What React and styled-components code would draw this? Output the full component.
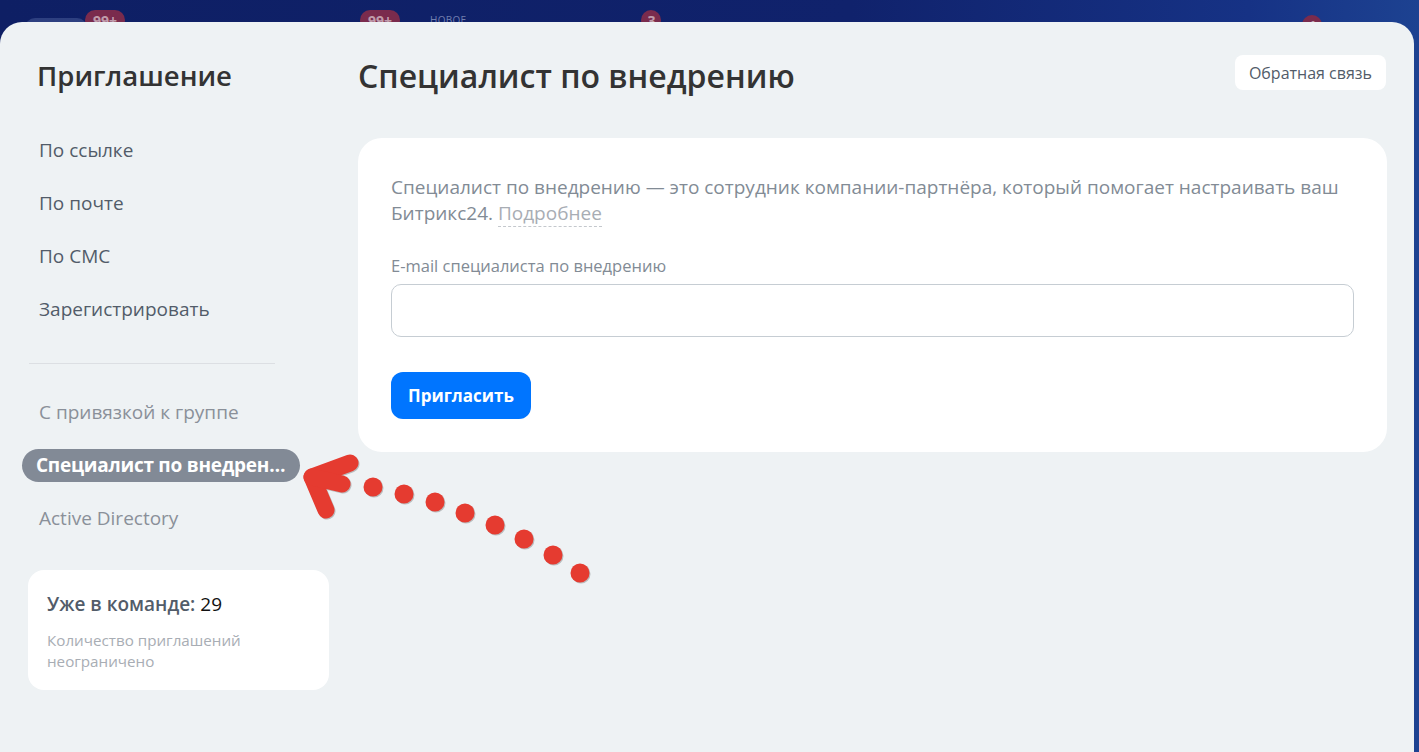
import React from "react";
import styled, { createGlobalStyle } from "styled-components";

const GlobalStyle = createGlobalStyle`
	html, body {
		margin: 0;
		padding: 0;
	}
	body {
		font-family: "Open Sans", "Noto Sans", Arial, sans-serif;
		background: linear-gradient(90deg, #0e1f64 0%, #10226c 60%, #163285 88%, #1d4291 100%);
		overflow: hidden;
	}
	* {
		box-sizing: border-box;
	}
`;

const Page = styled.div`
	height: 100vh;
	display: flex;
	flex-direction: column;
`;

// strip of the portal header peeking out above the slider
const TopStrip = styled.div`
	height: 22px;
	overflow: hidden;
	display: flex;
	align-items: flex-start;
	padding-top: 10px;
`;

const HeaderTab = styled.div`
	margin-left: 25px;
	margin-top: 8px;
	width: 62px;
	height: 20px;
	border-radius: 10px;
	background: rgba(140, 160, 210, 0.25);
`;

const Counter = styled.div`
	margin-left: ${(p) => p.$offset || 0}px;
	margin-top: ${(p) => p.$top || 0}px;
	min-width: ${(p) => p.$w || 40}px;
	height: 20px;
	padding: 0 6px;
	border-radius: 10px;
	background: #7a2b4d;
	color: rgba(255, 255, 255, 0.55);
	font-size: 14px;
	font-weight: 700;
	line-height: 22px;
	text-align: center;
`;

const HeaderLabel = styled.div`
	margin-left: 30px;
	margin-top: 3px;
	font-size: 10px;
	color: rgba(200, 210, 235, 0.55);
	letter-spacing: 0.3px;
`;

const Panel = styled.div`
	position: relative;
	flex: 1;
	margin-right: 5px;
	background: #eef2f4;
	border-radius: 22px 22px 0 0;
	display: grid;
	grid-template-columns: 358px 1fr;
`;

const Sidebar = styled.nav`
	display: flex;
	flex-direction: column;
	align-items: flex-start;
	padding: 37px 0 0 22px;
`;

const SideTitle = styled.h2`
	margin: 0 0 41px 15px;
	font-size: 27.5px;
	line-height: 34px;
	font-weight: 600;
	color: #333;
`;

const MenuItem = styled.div`
	max-width: 278px;
	height: 33px;
	line-height: 33px;
	margin-bottom: 20px;
	padding: 0 ${(p) => (p.$active ? 14 : 17)}px;
	border-radius: 17px;
	font-size: 19px;
	font-weight: ${(p) => (p.$active ? 700 : 400)};
	letter-spacing: ${(p) => (p.$active ? "-0.25px" : "0")};
	white-space: nowrap;
	overflow: hidden;
	text-overflow: ellipsis;
	background: ${(p) => (p.$active ? "#828a96" : "transparent")};
	color: ${(p) => (p.$active ? "#fff" : p.$muted ? "#8a9099" : "#525c69")};
`;

const Divider = styled.div`
	width: 246px;
	height: 1px;
	margin: 17px 0 32px 7px;
	background: #dcdfe3;
`;

const TeamCard = styled.div`
	width: 301px;
	margin: 15px 0 0 6px;
	padding: 22px 19px 18px;
	background: #fff;
	border-radius: 16px;
`;

const TeamTitle = styled.div`
	font-size: 19px;
	line-height: 24px;
	font-weight: 600;
	color: #525c69;
	b {
		font-weight: 500;
		color: #111;
	}
`;

const TeamNote = styled.div`
	margin-top: 14px;
	font-size: 15.2px;
	line-height: 21px;
	color: #a8adb4;
`;

const Main = styled.main`
	padding: 33px 27px 0 0;
`;

const MainHeader = styled.div`
	display: flex;
	justify-content: space-between;
	align-items: flex-start;
	margin-bottom: 41px;
`;

const MainTitle = styled.h1`
	margin: 0;
	font-size: 32px;
	line-height: 42px;
	font-weight: 600;
	color: #333;
`;

const FeedbackButton = styled.button`
	margin-right: 1px;
	height: 35px;
	padding: 0 14px;
	border: none;
	border-radius: 8px;
	background: #fff;
	font-family: inherit;
	font-size: 16px;
	color: #525c69;
`;

const Card = styled.section`
	background: #fff;
	border-radius: 24px;
	padding: 36px 33px 33px;
`;

const Description = styled.p`
	margin: 0 0 30px;
	font-size: 19px;
	line-height: 26px;
	color: #828b95;
	a {
		color: #a8adb4;
		text-decoration: none;
		border-bottom: 1px dashed #c4c8cd;
	}
`;

const FieldLabel = styled.label`
	display: block;
	margin-bottom: 8px;
	font-size: 16.5px;
	line-height: 20px;
	color: #828b95;
`;

const EmailInput = styled.input`
	display: block;
	width: 100%;
	height: 53px;
	border: 1px solid #c6cdd3;
	border-radius: 10px;
	padding: 0 16px;
	font-family: inherit;
	font-size: 16px;
	outline: none;
`;

const InviteButton = styled.button`
	margin-top: 35px;
	height: 47px;
	width: 140px;
	border: none;
	border-radius: 12px;
	background: #0075ff;
	color: #fff;
	font-family: inherit;
	font-size: 17px;
	font-weight: 700;
`;

// hand-drawn pointer over the sidebar
const Pointer = styled.svg`
	position: absolute;
	left: 295px;
	top: 423px;
	filter: drop-shadow(1.5px 1.5px 0 rgba(0, 0, 0, 0.22));
`;

const dots = [
	[78, 42],
	[109, 49],
	[140, 57],
	[170, 68],
	[200, 80],
	[229, 94],
	[258, 110],
	[285, 128],
];

function PointerArrow() {
	return (
		<Pointer width="310" height="150" viewBox="0 0 310 150">
			<g stroke="#e53b30" strokeWidth="17" strokeLinecap="round" strokeLinejoin="round" fill="none">
				<path d="M55 18 L17 32 L31 65" />
				<path d="M17 32 L47 39" />
			</g>
			{dots.map(([cx, cy]) => (
				<circle key={cx} cx={cx} cy={cy} r="9.5" fill="#e53b30" />
			))}
		</Pointer>
	);
}

const menu = ["По ссылке", "По почте", "По СМС", "Зарегистрировать"];

export default function App() {
	return (
		<>
			<GlobalStyle />
			<Page>
				<TopStrip>
					<HeaderTab />
					<Counter $offset={-2}>99+</Counter>
					<Counter $offset={235}>99+</Counter>
					<HeaderLabel>НОВОЕ</HeaderLabel>
					<Counter $offset={175} $w={20}>3</Counter>
					<Counter $offset={641} $w={20} $top={5}>1</Counter>
				</TopStrip>
				<Panel>
					<Sidebar>
						<SideTitle>Приглашение</SideTitle>
						{menu.map((item) => (
							<MenuItem key={item}>{item}</MenuItem>
						))}
						<Divider />
						<MenuItem $muted>С привязкой к группе</MenuItem>
						<MenuItem $active>Специалист по внедрению</MenuItem>
						<MenuItem $muted>Active Directory</MenuItem>
						<TeamCard>
							<TeamTitle>
								Уже в команде: <b>29</b>
							</TeamTitle>
							<TeamNote>
								Количество приглашений
								<br />
								неограничено
							</TeamNote>
						</TeamCard>
					</Sidebar>
					<Main>
						<MainHeader>
							<MainTitle>Специалист по внедрению</MainTitle>
							<FeedbackButton>Обратная связь</FeedbackButton>
						</MainHeader>
						<Card>
							<Description>
								Специалист по внедрению — это сотрудник компании-партнёра, который помогает настраивать ваш
								<br />
								Битрикс24. <a href="#more">Подробнее</a>
							</Description>
							<FieldLabel>E-mail специалиста по внедрению</FieldLabel>
							<EmailInput type="email" />
							<InviteButton>Пригласить</InviteButton>
						</Card>
					</Main>
					<PointerArrow />
				</Panel>
			</Page>
		</>
	);
}
